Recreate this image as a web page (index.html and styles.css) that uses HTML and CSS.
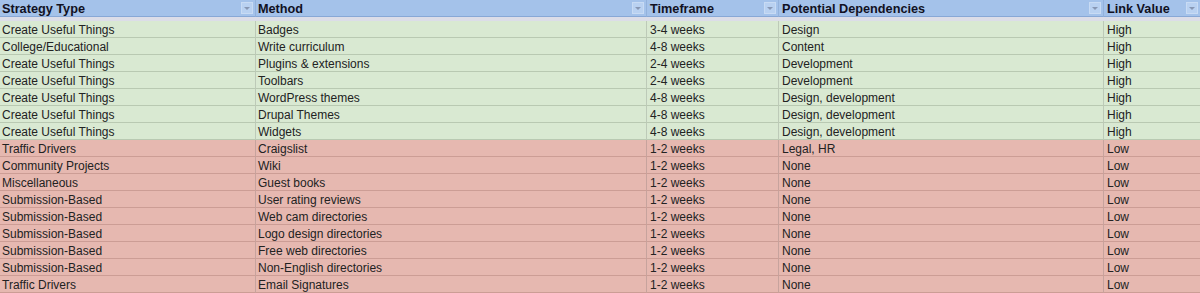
FILE: index.html
```html
<!DOCTYPE html>
<html>
<head>
<meta charset="utf-8">
<link rel="stylesheet" href="styles.css">
</head>
<body>
<div class="sheet">
  <div class="row head">
    <div class="cell"><span class="label">Strategy Type</span><span class="filter"></span></div>
    <div class="cell"><span class="label">Method</span><span class="filter"></span></div>
    <div class="cell"><span class="label">Timeframe</span><span class="filter"></span></div>
    <div class="cell"><span class="label">Potential Dependencies</span><span class="filter"></span></div>
    <div class="cell"><span class="label">Link Value</span><span class="filter"></span></div>
  </div>
  <div class="band"></div>
  <div class="row green"><div class="cell">Create Useful Things</div><div class="cell">Badges</div><div class="cell">3-4 weeks</div><div class="cell">Design</div><div class="cell">High</div></div>
  <div class="row green"><div class="cell">College/Educational</div><div class="cell">Write curriculum</div><div class="cell">4-8 weeks</div><div class="cell">Content</div><div class="cell">High</div></div>
  <div class="row green"><div class="cell">Create Useful Things</div><div class="cell">Plugins &amp; extensions</div><div class="cell">2-4 weeks</div><div class="cell">Development</div><div class="cell">High</div></div>
  <div class="row green"><div class="cell">Create Useful Things</div><div class="cell">Toolbars</div><div class="cell">2-4 weeks</div><div class="cell">Development</div><div class="cell">High</div></div>
  <div class="row green"><div class="cell">Create Useful Things</div><div class="cell">WordPress themes</div><div class="cell">4-8 weeks</div><div class="cell">Design, development</div><div class="cell">High</div></div>
  <div class="row green"><div class="cell">Create Useful Things</div><div class="cell">Drupal Themes</div><div class="cell">4-8 weeks</div><div class="cell">Design, development</div><div class="cell">High</div></div>
  <div class="row green"><div class="cell">Create Useful Things</div><div class="cell">Widgets</div><div class="cell">4-8 weeks</div><div class="cell">Design, development</div><div class="cell">High</div></div>
  <div class="row red"><div class="cell">Traffic Drivers</div><div class="cell">Craigslist</div><div class="cell">1-2 weeks</div><div class="cell">Legal, HR</div><div class="cell">Low</div></div>
  <div class="row red"><div class="cell">Community Projects</div><div class="cell">Wiki</div><div class="cell">1-2 weeks</div><div class="cell">None</div><div class="cell">Low</div></div>
  <div class="row red"><div class="cell">Miscellaneous</div><div class="cell">Guest books</div><div class="cell">1-2 weeks</div><div class="cell">None</div><div class="cell">Low</div></div>
  <div class="row red"><div class="cell">Submission-Based</div><div class="cell">User rating reviews</div><div class="cell">1-2 weeks</div><div class="cell">None</div><div class="cell">Low</div></div>
  <div class="row red"><div class="cell">Submission-Based</div><div class="cell">Web cam directories</div><div class="cell">1-2 weeks</div><div class="cell">None</div><div class="cell">Low</div></div>
  <div class="row red"><div class="cell">Submission-Based</div><div class="cell">Logo design directories</div><div class="cell">1-2 weeks</div><div class="cell">None</div><div class="cell">Low</div></div>
  <div class="row red"><div class="cell">Submission-Based</div><div class="cell">Free web directories</div><div class="cell">1-2 weeks</div><div class="cell">None</div><div class="cell">Low</div></div>
  <div class="row red"><div class="cell">Submission-Based</div><div class="cell">Non-English directories</div><div class="cell">1-2 weeks</div><div class="cell">None</div><div class="cell">Low</div></div>
  <div class="row red"><div class="cell">Traffic Drivers</div><div class="cell">Email Signatures</div><div class="cell">1-2 weeks</div><div class="cell">None</div><div class="cell">Low</div></div>
</div>
</body>
</html>
```

FILE: styles.css
```css
html, body {
  margin: 0;
  padding: 0;
  background: #ffffff;
}

.sheet {
  width: 1200px;
  font-family: "Liberation Sans", Arial, sans-serif;
  font-size: 12px;
  color: #222222;
}

.row {
  display: grid;
  grid-template-columns: 256px 391px 132px 325px 96px;
  height: 17px;
}

.cell {
  box-sizing: border-box;
  border-right: 1px solid rgba(90, 90, 90, 0.22);
  border-bottom: 1px solid rgba(0, 0, 0, 0.15);
  padding: 1px 3px 0 2px;
  line-height: 16px;
  white-space: nowrap;
  overflow: hidden;
}

.cell:last-child {
  border-right: none;
}

.row > .cell:nth-child(2) { padding-left: 2px; }
.row > .cell:nth-child(3) { padding-left: 3px; }
.row > .cell:nth-child(4) { padding-left: 3px; }
.row > .cell:nth-child(5) { padding-left: 3px; }

.head {
  background: #a4c2ea;
}

.head .cell {
  display: flex;
  align-items: center;
  justify-content: space-between;
  font-weight: bold;
  font-size: 12.7px;
  color: #111122;
  border-bottom: 1px solid #88a8d6;
  border-right: 1px solid #93b2dc;
  padding-top: 0;
  padding-right: 2px;
}

.head .label {
  position: relative;
  top: 1px;
}

.head .cell:last-child {
  border-right: none;
}

.filter {
  position: relative;
  box-sizing: border-box;
  width: 12px;
  height: 12px;
  flex: none;
  background: #b9d1f1;
  border: 1px solid #c8dbf4;
}

.filter::after {
  content: "";
  position: absolute;
  left: 2px;
  top: 4px;
  border-left: 3px solid transparent;
  border-right: 3px solid transparent;
  border-top: 3px solid #8797b4;
}

.band {
  height: 4px;
  background: #dcdde8;
}

.green {
  background: #d9e9d2;
}

.green .cell {
  border-bottom-color: #b9c9b2;
}

.red {
  background: #e6b8b0;
}

.red .cell {
  border-bottom-color: #cc9d95;
}
```
